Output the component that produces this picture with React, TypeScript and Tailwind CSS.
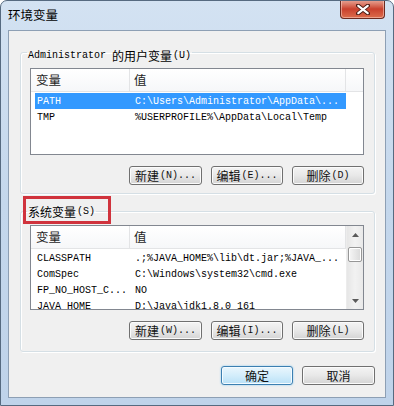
const MONO = "font-['Liberation_Mono','Noto_Sans_CJK_SC',monospace]";
const CJK = "font-['Noto_Sans_CJK_SC','Liberation_Sans',sans-serif]";

type Row = { name: string; value: string; selected?: boolean };

const userRows: Row[] = [
  { name: "PATH", value: "C:\\Users\\Administrator\\AppData\\...", selected: true },
  { name: "TMP", value: "%USERPROFILE%\\AppData\\Local\\Temp" },
];

const sysRows: Row[] = [
  { name: "CLASSPATH", value: ".;%JAVA_HOME%\\lib\\dt.jar;%JAVA_..." },
  { name: "ComSpec", value: "C:\\Windows\\system32\\cmd.exe" },
  { name: "FP_NO_HOST_C...", value: "NO" },
  { name: "JAVA_HOME", value: "D:\\Java\\jdk1.8.0_161" },
];

function Label({ cjk, tail }: { cjk: string; tail: string }) {
  return (
    <span className="inline-flex items-center leading-none whitespace-nowrap">
      <span className={`${CJK} text-[12px]`}>{cjk}</span>
      <span className={`${MONO} text-[10px] ml-[1px]`}>{tail}</span>
    </span>
  );
}

function Btn({ cjk, tail, w = "w-[73px]" }: { cjk: string; tail: string; w?: string }) {
  return (
    <button
      className={`${w} h-[19px] flex items-center justify-center rounded-[3px] border border-[#707070] bg-gradient-to-b from-[#f4f4f4] via-[#e8e8e8] to-[#d4d4d4] shadow-[inset_0_0_0_1px_#fbfbfb] text-[#111]`}
    >
      <Label cjk={cjk} tail={tail} />
    </button>
  );
}

function Header({ w }: { w: string }) {
  return (
    <div className={`flex h-[23px] ${w} border-b border-[#e3e4e6] bg-gradient-to-b from-white to-[#f6f7f9] text-[#1e1e1e]`}>
      <div className={`${CJK} w-[99px] pl-[5px] flex items-center text-[12.5px] border-r border-[#e3e4e6]`}>变量</div>
      <div className={`${CJK} w-[216px] pl-[4px] flex items-center text-[12.5px] border-r border-[#e3e4e6]`}>值</div>
      <div className="flex-1" />
    </div>
  );
}

function Rows({ rows }: { rows: Row[] }) {
  return (
    <div className="pt-[1px]">
      {rows.map((r) => (
        <div
          key={r.name}
          className={`${MONO} flex h-[16px] items-center ml-[4px] w-[311px] text-[10px] whitespace-nowrap ${
            r.selected ? "bg-[#3399ff] text-white" : "text-black"
          }`}
        >
          <div className="w-[95px] pl-[2px]">{r.name}</div>
          <div className="pl-[5px]">{r.value}</div>
        </div>
      ))}
    </div>
  );
}

function ScrollBar() {
  return (
    <div className="w-[17px] h-full flex flex-col bg-gradient-to-r from-[#e6e6e6] via-[#f2f2f2] to-[#e9e9e9] border-l border-[#ececec]">
      <div className="h-[17px] flex items-center justify-center">
        <svg width="7" height="4" viewBox="0 0 7 4">
          <path d="M0 4 L3.5 0 L7 4 Z" fill="#5a5a5a" />
        </svg>
      </div>
      <div className="mt-[4px] mx-[1px] h-[15px] rounded-[2px] border border-[#979797] bg-gradient-to-r from-[#f6f6f6] to-[#d9d9d9] shadow-[inset_0_0_0_1px_#ffffff]" />
      <div className="flex-1" />
      <div className="h-[17px] flex items-center justify-center">
        <svg width="7" height="4" viewBox="0 0 7 4">
          <path d="M0 0 L3.5 4 L7 0 Z" fill="#5a5a5a" />
        </svg>
      </div>
    </div>
  );
}

function Group({
  legend,
  children,
  className,
}: {
  legend: React.ReactNode;
  children: React.ReactNode;
  className: string;
}) {
  return (
    <fieldset
      className={`w-[355px] ml-[11px] border border-[#d5dfe5] rounded-[3px] shadow-[inset_1px_1px_0_#ffffff,1px_1px_0_#ffffff] pl-[9px] pr-[10px] ${className}`}
    >
      <legend className="-ml-[3px] px-[1px] h-[12px] leading-[12px] text-black">{legend}</legend>
      {children}
    </fieldset>
  );
}

export default function App() {
  return (
    <div className="relative w-[394px] h-[406px] overflow-hidden rounded-t-[7px] border border-[#566a80] bg-gradient-to-b from-[#d3e2f2] via-[#c4d7ec] to-[#bfd3ea] flex flex-col">
      {/* title bar */}
      <div className="h-[29px] flex justify-between">
        <div className={`${CJK} pl-[7px] pt-[5px] text-[12.5px] text-black`}>环境变量</div>
        <div className="-mt-[1px] mr-[8px] w-[45px] h-[19px] rounded-b-[4px] border border-t-0 border-[#6b2a20] bg-gradient-to-b from-[#e7a798] via-[#c9402d] to-[#dc6c4c] shadow-[inset_0_0_0_1px_rgba(255,220,210,0.5)] flex items-center justify-center">
          <svg width="14" height="11" viewBox="0 0 14 11">
            <path d="M2 1.5 L12 9.5 M12 1.5 L2 9.5" stroke="#4a1c14" strokeWidth="4" strokeLinecap="round" />
            <path d="M2.3 1.8 L11.7 9.2 M11.7 1.8 L2.3 9.2" stroke="#ffffff" strokeWidth="2.2" strokeLinecap="round" />
          </svg>
        </div>
      </div>

      {/* client area */}
      <div className="ml-[7px] w-[378px] h-[368px] border border-[#8d9fb4] bg-[#f0f0f0] flex flex-col">
        <Group
          className="mt-[15px] pb-[8px]"
          legend={
            <span className="inline-flex items-center leading-none whitespace-nowrap">
              <span className={`${MONO} text-[10px]`}>Administrator</span>
              <span className={`${CJK} text-[12px] ml-[6px]`}>的用户变量</span>
              <span className={`${MONO} text-[10px] ml-[1px]`}>(U)</span>
            </span>
          }
        >
          <div className="mt-[10px] w-[334px] h-[87px] border border-[#828790] bg-white overflow-hidden">
            <Header w="w-full" />
            <Rows rows={userRows} />
          </div>
          <div className="mt-[11px] flex justify-end gap-[9px]">
            <Btn cjk="新建" tail="(N)..." />
            <Btn cjk="编辑" tail="(E)..." w="w-[72px]" />
            <Btn cjk="删除" tail="(D)" w="w-[72px]" />
          </div>
        </Group>

        <Group className="mt-[11px] pb-[11px]" legend={<Label cjk="系统变量" tail="(S)" />}>
          <div className="mt-[8px] w-[334px] h-[85px] border border-[#828790] bg-white overflow-hidden flex">
            <div className="flex-1 overflow-hidden">
              <Header w="w-full" />
              <Rows rows={sysRows} />
            </div>
            <ScrollBar />
          </div>
          <div className="mt-[11px] flex justify-end gap-[9px]">
            <Btn cjk="新建" tail="(W)..." />
            <Btn cjk="编辑" tail="(I)..." w="w-[72px]" />
            <Btn cjk="删除" tail="(L)" w="w-[72px]" />
          </div>
        </Group>

        <div className="mt-[14px] pr-[10px] flex justify-end gap-[9px]">
          <button
            className={`${CJK} w-[72px] h-[19px] rounded-[3px] border border-[#3c7fb1] bg-gradient-to-b from-[#eaf6fd] via-[#d3edfb] to-[#b9e0f7] shadow-[inset_0_0_0_1px_#f4fbff,0_0_2px_#7fc4ee] text-[12px] leading-none text-[#111]`}
          >
            确定
          </button>
          <button
            className={`${CJK} w-[73px] h-[19px] rounded-[3px] border border-[#707070] bg-gradient-to-b from-[#f4f4f4] via-[#e8e8e8] to-[#d4d4d4] shadow-[inset_0_0_0_1px_#fbfbfb] text-[12px] leading-none text-[#111]`}
          >
            取消
          </button>
        </div>
      </div>

      {/* red annotation box */}
      <div className="absolute left-[22px] top-[195px] w-[88px] h-[28px] border-[3px] border-[#d0333d]" />
    </div>
  );
}
